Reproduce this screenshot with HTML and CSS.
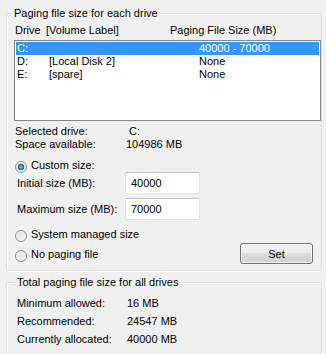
FILE: index.html
```html
<!DOCTYPE html>
<html lang="en">
<head>
    <meta charset="UTF-8">
    <title>Virtual Memory</title>
    <link rel="stylesheet" href="styles.css">
</head>
<body>
    <fieldset class="group group-drives">
        <legend>Paging file size for each drive</legend>

        <div class="list-header">
            <span class="col-drive">Drive</span>
            <span class="col-label">[Volume Label]</span>
            <span>Paging File Size (MB)</span>
        </div>

        <div class="drive-list">
            <div class="drive-row selected">
                <span class="col-drive">C:</span>
                <span class="col-label"></span>
                <span>40000 - 70000</span>
            </div>
            <div class="drive-row">
                <span class="col-drive">D:</span>
                <span class="col-label">[Local Disk 2]</span>
                <span>None</span>
            </div>
            <div class="drive-row">
                <span class="col-drive">E:</span>
                <span class="col-label">[spare]</span>
                <span>None</span>
            </div>
        </div>

        <div class="info">
            <div class="info-row">
                <span class="info-label">Selected drive:</span>
                <span class="info-value drive-letter">C:</span>
            </div>
            <div class="info-row">
                <span class="info-label">Space available:</span>
                <span class="info-value">104986 MB</span>
            </div>
        </div>

        <div class="radio-row first">
            <span class="radio checked"></span>
            <span>Custom size:</span>
        </div>
        <div class="size-row">
            <span class="size-label">Initial size (MB):</span>
            <input class="size-input" type="text" value="40000">
        </div>
        <div class="size-row second">
            <span class="size-label">Maximum size (MB):</span>
            <input class="size-input" type="text" value="70000">
        </div>

        <div class="radio-row system">
            <span class="radio"></span>
            <span>System managed size</span>
        </div>
        <div class="last-row">
            <div class="radio-row">
                <span class="radio"></span>
                <span>No paging file</span>
            </div>
            <button class="set-btn">Set</button>
        </div>
    </fieldset>

    <fieldset class="group group-total">
        <legend>Total paging file size for all drives</legend>
        <div class="total-row">
            <span class="total-label">Minimum allowed:</span>
            <span>16 MB</span>
        </div>
        <div class="total-row">
            <span class="total-label">Recommended:</span>
            <span>24547 MB</span>
        </div>
        <div class="total-row">
            <span class="total-label">Currently allocated:</span>
            <span>40000 MB</span>
        </div>
    </fieldset>
</body>
</html>
```

FILE: styles.css
```css
* {
    margin: 0;
    padding: 0;
    box-sizing: border-box;
}

body {
    background-color: #f0f0f0;
    font-family: "Liberation Sans", Arial, sans-serif;
    font-size: 11px;
    line-height: 13px;
    color: #000;
    padding-left: 6px;
    overflow: hidden;
}

.group {
    width: 316px;
    border: 1px solid #d5dfe5;
    border-radius: 3px;
    box-shadow: inset 1px 1px 0 #fff, 1px 1px 0 #fff;
    padding: 4px 0 6px 7px;
}

.group legend {
    margin-left: -2px;
    padding: 0 2px;
    line-height: 13px;
}

.group-drives {
    margin-top: 7px;
}

.group-total {
    margin-top: 5px;
    padding-top: 5px;
    padding-left: 10px;
}

/* Drive list */
.list-header {
    display: flex;
    padding-left: 1px;
    margin-bottom: 3px;
    height: 13px;
}

.col-drive {
    width: 31px;
}

.col-label {
    width: 124px;
}

.drive-list {
    width: 307px;
    height: 81px;
    border: 1px solid #828790;
    background-color: #fff;
    padding: 1px;
}

.drive-row {
    display: flex;
    height: 13px;
    padding-left: 1px;
}

.drive-row .col-drive {
    width: 32px;
}

.drive-row .col-label {
    width: 150px;
}

.drive-row.selected {
    background-color: #3399ff;
    color: #fff;
}

/* Selected drive info */
.info {
    margin-top: 4px;
    padding-left: 1px;
}

.info-row {
    display: flex;
    height: 13px;
}

.info-label {
    width: 111px;
}

.drive-letter {
    padding-left: 3px;
}

/* Radios */
.radio-row {
    display: flex;
    align-items: flex-start;
    height: 13px;
    padding-left: 1px;
}

.radio-row.first {
    margin-top: 8px;
}

.radio-row.system {
    margin-top: 8px;
}

.radio {
    width: 12px;
    height: 12px;
    margin-top: 2px;
    margin-right: 4px;
    border: 1px solid #8e8f8f;
    border-radius: 50%;
    background: linear-gradient(135deg, #dcdcdc, #f8f8f8);
    box-shadow: inset 0 0 0 1px #f4f4f4;
}

.radio.checked {
    background: radial-gradient(circle, #6fd0ff 0, #2a8ad4 2px, #1a5a9a 3px, #e2e2e2 3.6px, #f6f6f6 6px);
}

/* Size inputs */
.size-row {
    display: flex;
    align-items: center;
    height: 22px;
    padding-left: 3px;
}

.size-row.second {
    margin-top: 4px;
}

.size-label {
    width: 108px;
}

.size-input {
    width: 75px;
    height: 22px;
    border: 1px solid #e2e3ea;
    border-top-color: #c2c4ca;
    border-radius: 2px;
    background-color: #fff;
    padding: 0 5px;
    font-family: inherit;
    font-size: 11px;
    color: #000;
    outline: none;
}

.last-row {
    display: flex;
    justify-content: space-between;
    align-items: center;
    height: 21px;
    margin-top: 2px;
    padding-right: 8px;
}

.last-row .radio-row {
    padding-top: 2px;
    height: 15px;
}

.set-btn {
    width: 73px;
    height: 21px;
    border: 1px solid #707070;
    border-radius: 3px;
    background: linear-gradient(#f2f2f2 0%, #ebebeb 50%, #dddddd 50%, #cfcfcf 100%);
    box-shadow: inset 0 0 0 1px #fbfbfb;
    font-family: inherit;
    font-size: 11px;
    color: #000;
}

/* Totals */
.total-row {
    display: flex;
    height: 18px;
    line-height: 18px;
}

.total-label {
    width: 110px;
}
```
